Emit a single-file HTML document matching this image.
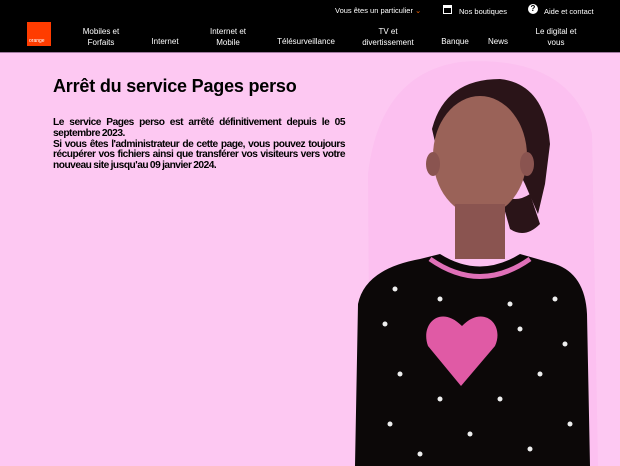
<!DOCTYPE html>
<html><head><meta charset="utf-8"><style>
*{margin:0;padding:0;box-sizing:border-box}
body{width:620px;height:466px;overflow:hidden;background:#fdc8f2;font-family:"Liberation Sans",sans-serif;position:relative}
.hdr{position:absolute;left:0;top:0;width:620px;height:53px;background:#000;border-bottom:1px solid #a07aa0}
.t{position:absolute;color:#fff;font-size:7.5px;white-space:nowrap}
.n{position:absolute;color:#fff;font-size:8px;text-align:center;line-height:10.5px}
.logo{position:absolute;left:27px;top:22px;width:24px;height:24px;background:#ff3c00}
.logo span{position:absolute;left:2px;bottom:2px;font-size:5px;color:#fff}
h1{position:absolute;left:53px;top:76px;font-size:18px;font-weight:bold;color:#000;letter-spacing:-0.2px}
p{position:absolute;left:53px;top:118px;width:292px;font-size:10.2px;line-height:10.8px;font-weight:bold;text-align:justify;color:#000;letter-spacing:-0.5px;word-spacing:-0.5px}
</style></head><body>
<div class="hdr">
<div class="t" style="left:335px;top:6px">Vous êtes un particulier <span style="color:#f60">⌄</span></div>
<div style="position:absolute;left:443px;top:5px;width:9px;height:9px;border:1.5px solid #fff;border-top-width:3px"></div>
<div class="t" style="left:459px;top:7px">Nos boutiques</div>
<div style="position:absolute;left:528px;top:4px;width:10px;height:10px;border-radius:50%;background:#fff;color:#000;font-size:8px;font-weight:bold;text-align:center;line-height:10px">?</div>
<div class="t" style="left:544px;top:7px">Aide et contact</div>
<div class="logo"><span>orange</span></div>
<div class="n" style="left:72px;top:27px;width:58px">Mobiles et<br>Forfaits</div>
<div class="n" style="left:145px;top:37px;width:40px">Internet</div>
<div class="n" style="left:198px;top:27px;width:60px">Internet et<br>Mobile</div>
<div class="n" style="left:270px;top:37px;width:72px">Télésurveillance</div>
<div class="n" style="left:355px;top:27px;width:66px">TV et<br>divertissement</div>
<div class="n" style="left:436px;top:37px;width:38px">Banque</div>
<div class="n" style="left:482px;top:37px;width:32px">News</div>
<div class="n" style="left:526px;top:27px;width:60px">Le digital et<br>vous</div>
</div>
<h1>Arrêt du service Pages perso</h1>
<p>Le service Pages perso est arrêté définitivement depuis le 05 septembre 2023.<br>Si vous êtes l'administrateur de cette page, vous pouvez toujours récupérer vos fichiers ainsi que transférer vos visiteurs vers votre nouveau site jusqu'au 09 janvier 2024.</p>
<svg style="position:absolute;left:340px;top:54px" width="280" height="412">
<path d="M30 412 L28 120 Q40 20 120 8 Q230 0 252 80 L258 412Z" fill="#fbbbef" opacity="0.6"/>
<path d="M92 75 Q105 25 160 25 Q205 30 210 90 L205 130 L198 160 L185 130 L175 110 L100 110 Z" fill="#2a1418"/>
<path d="M160 140 Q175 150 190 140 L200 170 Q185 185 170 175Z" fill="#2a1418"/>
<ellipse cx="140" cy="102" rx="47" ry="60" fill="#9a6258"/>
<ellipse cx="93" cy="110" rx="7" ry="12" fill="#8a5450"/><ellipse cx="187" cy="110" rx="7" ry="12" fill="#8a5450"/>
<rect x="115" y="150" width="50" height="55" fill="#8a5450"/>
<path d="M15 412 L18 250 Q25 215 80 205 L100 200 Q140 225 180 200 L215 210 Q245 220 247 260 L250 412Z" fill="#0c0808"/>
<path d="M90 205 Q140 240 190 205" stroke="#e070b8" stroke-width="5" fill="none"/>
<path d="M122 272 C100 250 80 270 88 292 L121 332 L155 292 C165 270 143 250 122 272Z" fill="#e05aa5"/>
<g fill="#eee"><circle cx="55" cy="235" r="2.5"/><circle cx="100" cy="245" r="2.5"/><circle cx="170" cy="250" r="2.5"/><circle cx="215" cy="245" r="2.5"/><circle cx="45" cy="270" r="2.5"/><circle cx="180" cy="275" r="2.5"/><circle cx="225" cy="290" r="2.5"/><circle cx="60" cy="320" r="2.5"/><circle cx="200" cy="320" r="2.5"/><circle cx="100" cy="345" r="2.5"/><circle cx="160" cy="345" r="2.5"/><circle cx="50" cy="370" r="2.5"/><circle cx="230" cy="370" r="2.5"/><circle cx="130" cy="380" r="2.5"/><circle cx="80" cy="400" r="2.5"/><circle cx="190" cy="395" r="2.5"/></g>
</svg>
</body></html>
